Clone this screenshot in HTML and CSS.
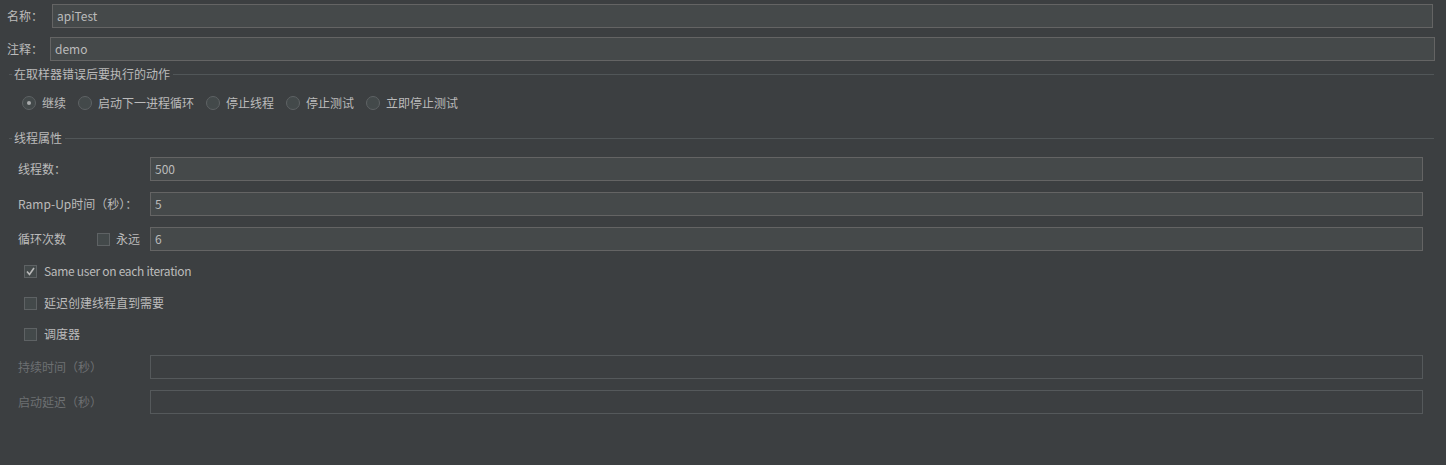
FILE: index.html
```html
<!DOCTYPE html>
<html lang="zh">
<head>
<meta charset="utf-8">
<title>线程组</title>
<link rel="stylesheet" href="styles.css">
</head>
<body>
<div class="page">
  <div class="row row-name">
    <span class="lbl lbl-name">名称：</span>
    <div class="field">apiTest</div>
  </div>
  <div class="row row-comment">
    <span class="lbl lbl-comment">注释：</span>
    <div class="field">demo</div>
  </div>

  <div class="section-title s1"><span>在取样器错误后要执行的动作</span></div>
  <div class="radios">
    <label class="radio-item"><span class="radio on"></span>继续</label>
    <label class="radio-item"><span class="radio"></span>启动下一进程循环</label>
    <label class="radio-item"><span class="radio"></span>停止线程</label>
    <label class="radio-item"><span class="radio"></span>停止测试</label>
    <label class="radio-item"><span class="radio"></span>立即停止测试</label>
  </div>

  <div class="section-title s2"><span>线程属性</span></div>
  <div class="props">
    <div class="prow">
      <span class="plabel">线程数：</span>
      <div class="field pf">500</div>
    </div>
    <div class="prow">
      <span class="plabel">Ramp-Up时间（秒）：</span>
      <div class="field pf">5</div>
    </div>
    <div class="prow">
      <span class="plabel loop">循环次数</span>
      <span class="checkbox"></span>
      <span class="forever">永远</span>
      <div class="field pf">6</div>
    </div>
    <div class="crow c1"><span class="checkbox checked"><svg viewBox="0 0 13 13" width="13" height="13"><polyline points="3,6.5 5.5,9.5 10,3" fill="none" stroke="#b9b9b9" stroke-width="1.6"/></svg></span><span class="latin">Same user on each iteration</span></div>
    <div class="crow c2"><span class="checkbox"></span>延迟创建线程直到需要</div>
    <div class="crow c3"><span class="checkbox"></span>调度器</div>
    <div class="prow disabled d1">
      <span class="plabel">持续时间（秒）</span>
      <div class="field pf"></div>
    </div>
    <div class="prow disabled d2">
      <span class="plabel">启动延迟（秒）</span>
      <div class="field pf"></div>
    </div>
  </div>
</div>
</body>
</html>
```
FILE: styles.css
```css
* { box-sizing: border-box; }
html, body {
  margin: 0;
  padding: 0;
  background: #3c3f41;
}
body {
  width: 1446px;
  height: 465px;
  overflow: hidden;
  font-family: "Noto Sans CJK SC", "Noto Sans", sans-serif;
  font-size: 12px;
  color: #bbbbbb;
}
.page {
  padding-top: 4px;
}
.row {
  display: flex;
  align-items: center;
  height: 24px;
  padding-left: 7px;
}
.row-name { margin-right: 13px; }
.row-comment { margin-top: 9px; margin-right: 11px; }
.lbl-name { width: 45px; }
.lbl-comment { width: 43px; }
.lbl { line-height: 16px; }

.field {
  flex: 1;
  height: 24px;
  background: #45494a;
  border: 1px solid #646464;
  padding-left: 4px;
  line-height: 22px;
  color: #bbbbbb;
}

.section-title {
  display: flex;
  align-items: center;
  height: 14px;
  margin-left: 9px;
  margin-right: 12px;
  line-height: 14px;
}
.section-title::before {
  content: "";
  width: 3px;
  height: 1px;
  background: #515658;
}
.section-title::after {
  content: "";
  flex: 1;
  height: 1px;
  background: #515658;
}
.section-title span { padding: 0 3px 0 2px; }
.s1 { margin-top: 6px; }
.s2 { margin-top: 20px; }

.radios {
  display: flex;
  align-items: center;
  gap: 12px;
  height: 16px;
  margin-top: 14px;
  padding-left: 22px;
}
.radio-item {
  display: flex;
  align-items: center;
  line-height: 16px;
}
.radio {
  width: 14px;
  height: 14px;
  border-radius: 50%;
  border: 1px solid #5e6264;
  background: #43494a;
  margin-right: 6px;
  position: relative;
}
.radio.on::after {
  content: "";
  position: absolute;
  left: 4px;
  top: 4px;
  width: 4px;
  height: 4px;
  border-radius: 50%;
  background: #a9abac;
}

.props {
  margin-top: 12px;
}
.prow {
  display: flex;
  align-items: center;
  height: 24px;
  padding-left: 18px;
  margin-right: 23px;
  margin-bottom: 11px;
}
.plabel {
  width: 132px;
  line-height: 16px;
}
.plabel.loop { width: 79px; }
.forever {
  margin-left: 6px;
  width: 34px;
  line-height: 16px;
}
.checkbox {
  width: 13px;
  height: 13px;
  border: 1px solid #5e6264;
  background: #43494a;
  display: inline-flex;
  flex: none;
}
.checkbox.checked svg { display: block; margin: -1px; }

.crow {
  display: flex;
  align-items: center;
  height: 14px;
  padding-left: 24px;
  line-height: 14px;
}
.crow .checkbox { margin-right: 7px; }
.latin { letter-spacing: -0.3px; }
.c1 { margin-top: 13px; }
.c2 { margin-top: 18px; }
.c3 { margin-top: 17px; }

.disabled .plabel { color: #6d7072; }
.disabled .field {
  background: #3c3f41;
  border-color: #55595b;
}
.d1 { margin-top: 14px; }
.d2 { margin-top: 0; }
```
